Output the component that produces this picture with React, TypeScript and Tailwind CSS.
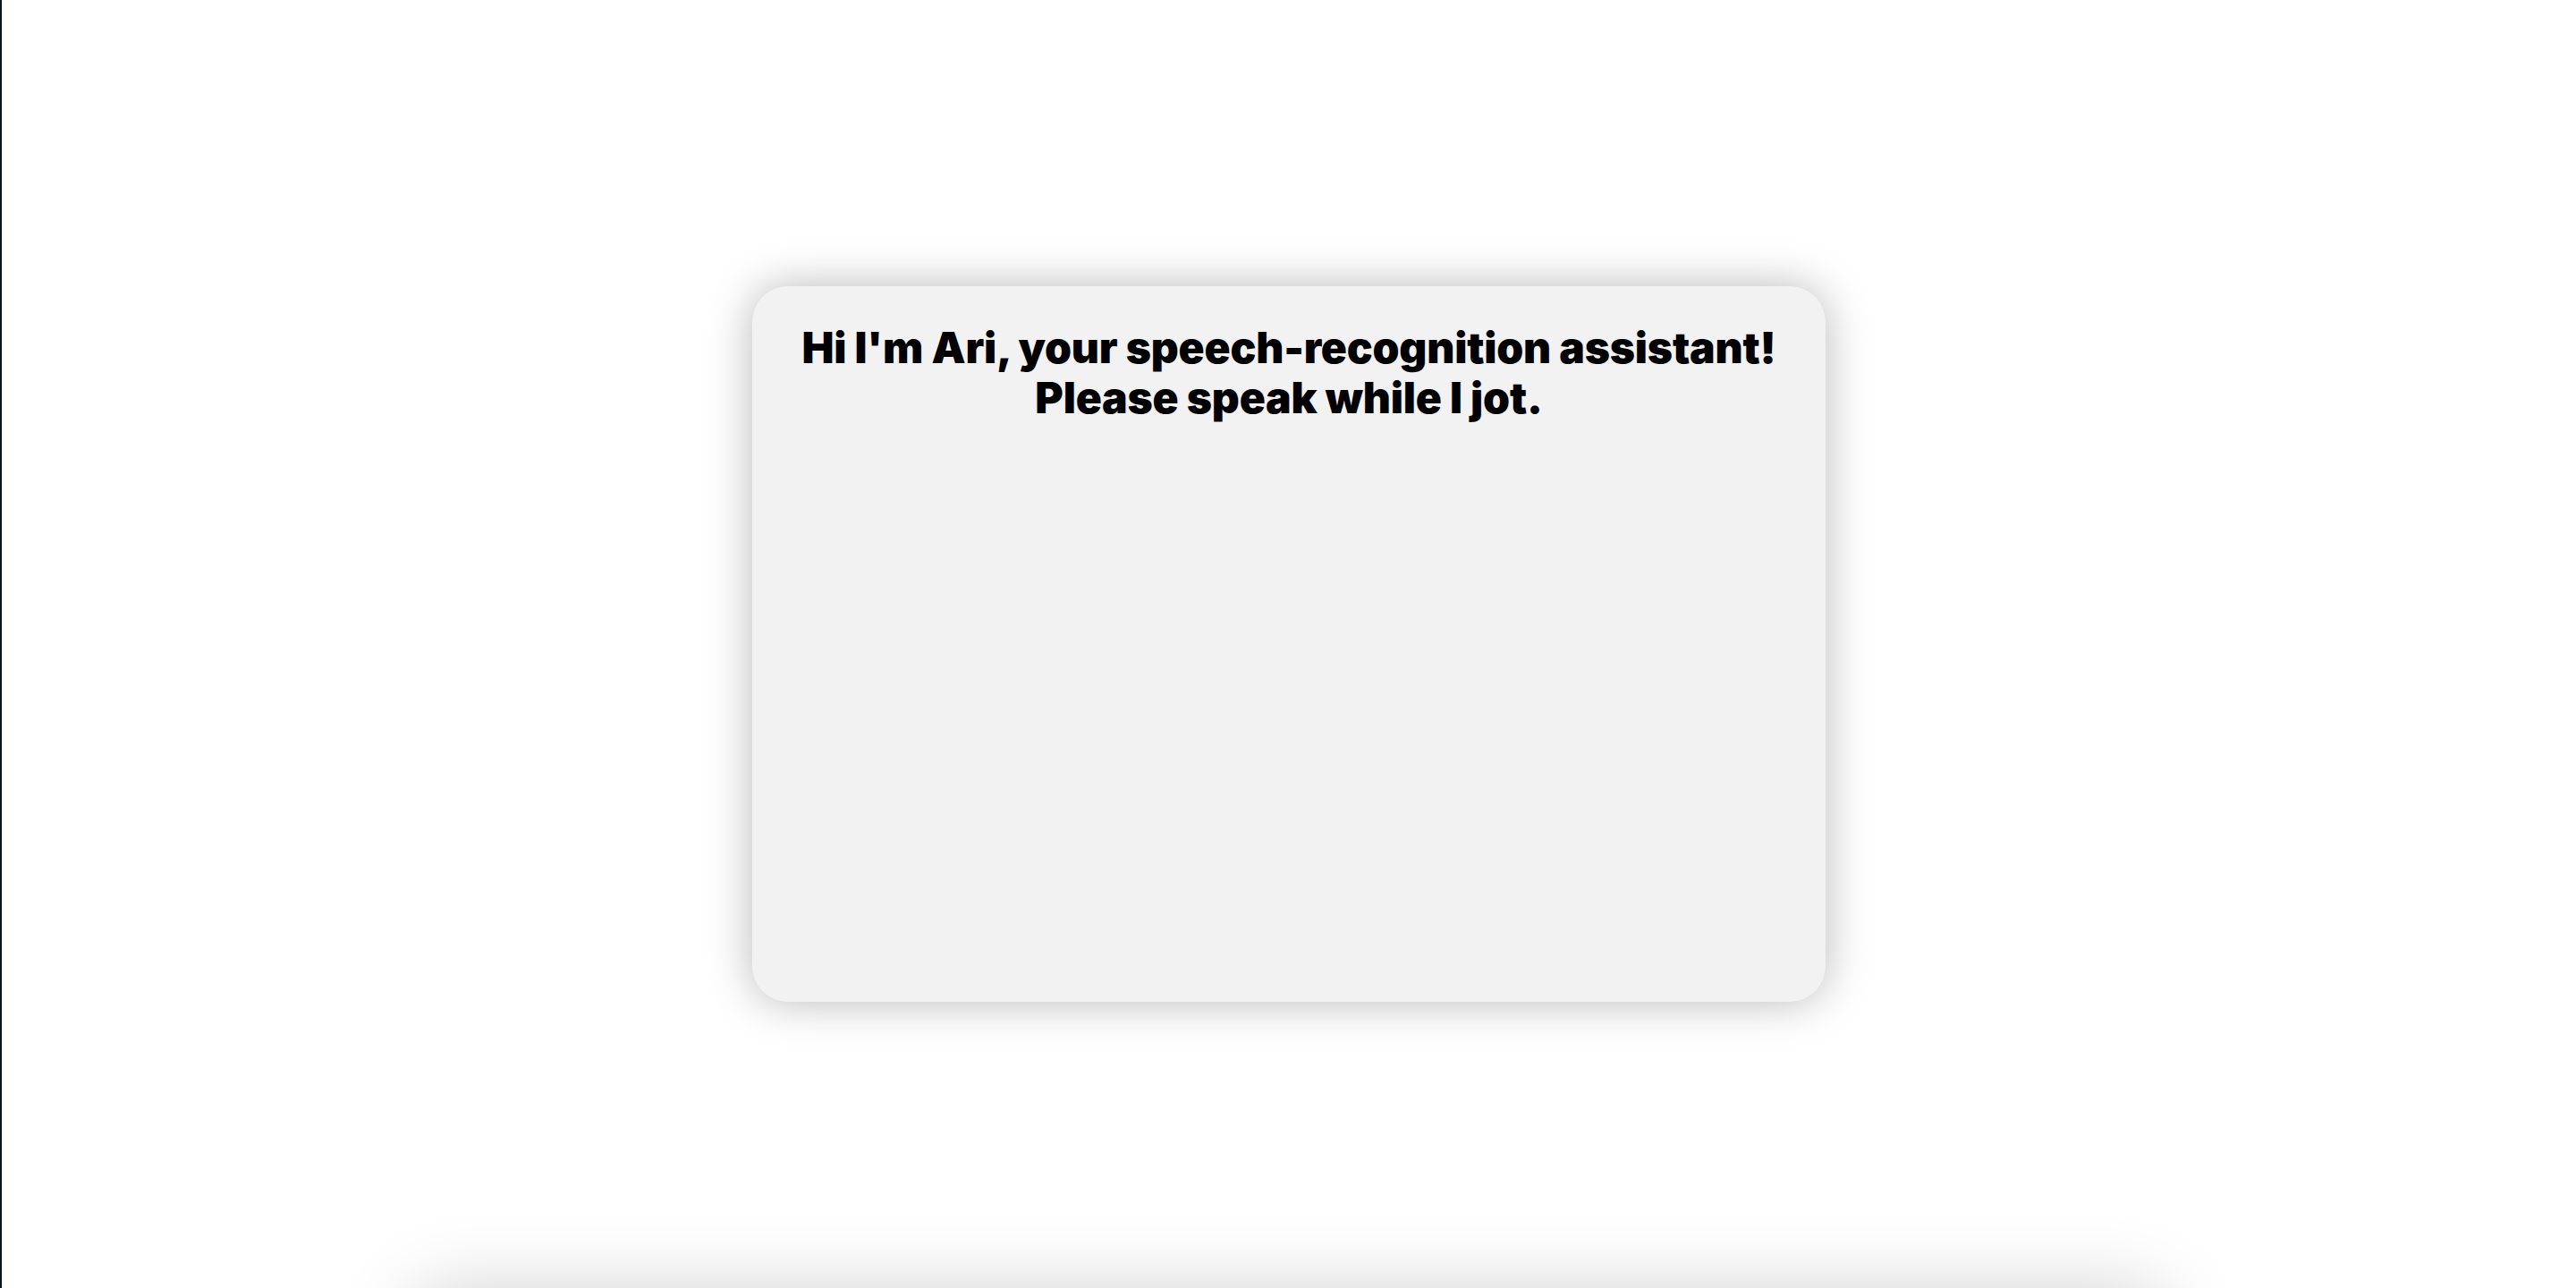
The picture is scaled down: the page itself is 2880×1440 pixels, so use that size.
import React from "react";

export default function App() {
  return (
    <div className="relative min-h-screen bg-white border-l-2 border-[#0b1226]" style={{ fontFamily: "Inter, 'Noto Sans', sans-serif" }}>
      <section className="h-[1440px] flex items-center justify-center">
        <div className="w-[1200px] h-[800px] rounded-[40px] bg-[#f2f2f2] shadow-[0_0_50px_rgba(0,0,0,0.28)] pt-[41px] text-center">
          <h1 className="text-[48px] leading-[56px] font-black text-black tracking-[-0.004em]">
            Hi I'm Ari, your speech-recognition assistant!
            <br />
            Please speak while I jot.
          </h1>
        </div>
      </section>
      <section className="mx-auto mt-[6px] w-[1960px] h-[600px] rounded-[40px] bg-[#f2f2f2] shadow-[0_0_90px_rgba(0,0,0,0.2)]" />
    </div>
  );
}
